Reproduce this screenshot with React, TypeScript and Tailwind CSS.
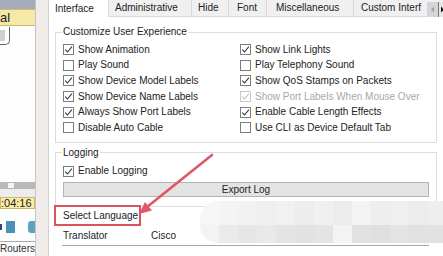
import React from "react";

function Check({ checked, disabled }: { checked: boolean; disabled?: boolean }) {
  return (
    <span
      className={`flex h-[11px] w-[11px] shrink-0 items-center justify-center border bg-white ${
        disabled ? "border-[#c8c8c8]" : "border-[#7d7d7d]"
      }`}
    >
      {checked && (
        <svg width="9" height="9" viewBox="0 0 9 9">
          <path
            d="M1.2 4.6 L3.5 7 L7.9 1.6"
            fill="none"
            stroke={disabled ? "#c4c4c4" : "#3a3a3a"}
            strokeWidth="1.1"
          />
        </svg>
      )}
    </span>
  );
}

function Row({ label, checked, disabled }: { label: string; checked: boolean; disabled?: boolean }) {
  return (
    <div className="flex h-[15.6px] items-center gap-[4px]">
      <Check checked={checked} disabled={disabled} />
      <span className={`whitespace-nowrap leading-[12px] ${disabled ? "text-[#a8a8a8]" : "text-[#222]"}`}>
        {label}
      </span>
    </div>
  );
}

const left = [
  ["Show Animation", true],
  ["Play Sound", false],
  ["Show Device Model Labels", true],
  ["Show Device Name Labels", true],
  ["Always Show Port Labels", true],
  ["Disable Auto Cable", false],
] as const;

const right = [
  ["Show Link Lights", true, false],
  ["Play Telephony Sound", false, false],
  ["Show QoS Stamps on Packets", true, false],
  ["Show Port Labels When Mouse Over", true, true],
  ["Enable Cable Length Effects", true, false],
  ["Use CLI as Device Default Tab", false, false],
] as const;

const tabs: [string, string, string][] = [
  ["Interface", "w-[59px]", "pl-[6px]"],
  ["Administrative", "w-[83px]", "pl-[6px]"],
  ["Hide", "w-[37px]", "pl-[6px]"],
  ["Font", "w-[38px]", "pl-[8px]"],
  ["Miscellaneous", "w-[87px]", "pl-[9px]"],
  ["Custom Interf", "w-[74px]", "pl-[7px]"],
];

function LeftPanel() {
  return (
    <div className="flex w-[36px] shrink-0 flex-col overflow-hidden border-r border-[#c4c4c4] bg-[#fdfdfd]">
      <div className="h-[9px] bg-[#a5abba]" />
      <div className="flex h-[17px] items-center border-y border-[#cdbd72] bg-[#f6e9a8] text-[13px] leading-[14px] text-[#222]">
        al
      </div>
      <div className="mt-[1px] h-[18px] w-[10px] rounded-br-[5px] border-b border-r border-[#666] bg-white pt-[3px]">
        <div className="h-[11px] w-[5px] bg-[#cfcfcf]" />
      </div>
      <div className="h-[137px]" />
      <div className="flex h-[7px] items-center bg-[#b9b9b9] pl-[8px]">
        <div className="h-[5px] w-[6px] bg-[#f4f4f4]" />
      </div>
      <div className="h-[8px] bg-[#ececec]" />
      <div className="flex h-[12px] items-center border border-[#cbb869] bg-[#f8eca6] text-[11px] leading-[12px] text-[#222]">
        :04:16
      </div>
      <div className="h-[11px]" />
      <div className="flex h-[13px] items-center gap-[4px]">
        <div className="h-[6px] w-[3px] bg-[#2c4a78]" />
        <div className="h-[12px] w-[11px] bg-[#4a93b8]" />
        <div className="ml-[9px] h-[12px] w-[8px] rounded-l-[3px] bg-[#5fa2c2]" />
      </div>
      <div className="h-[8px]" />
      <div className="border-t border-[#a9a9a9] pt-[1px] text-[10px] leading-[12px] text-[#333]">Routers</div>
    </div>
  );
}

function Dialog() {
  return (
    <div className="flex min-w-0 flex-1 flex-col border-l border-[#d2d2d2] bg-white">
      <div className="flex h-[17px] shrink-0 bg-[#f0f0f0]">
        {tabs.map(([t, w, pl], i) => (
          <div
            key={t}
            className={`${w} ${pl} flex shrink-0 items-center overflow-hidden whitespace-nowrap leading-[12px] text-[#222] ${
              i === 0 ? "bg-white" : "border-b border-l border-[#d9d9d9]"
            }`}
          >
            {t}
          </div>
        ))}
        <div className="flex h-[15px] w-[11px] shrink-0 items-center justify-center self-end bg-[#d6d6d6]">
          <svg width="5" height="7" viewBox="0 0 5 7">
            <path d="M4 0.5 L1 3.5 L4 6.5 Z" fill="#a0a0a0" />
          </svg>
        </div>
        <div className="flex h-[15px] w-[7px] shrink-0 items-center justify-center self-end border-l border-[#777] bg-[#e6e6e6]">
          <svg width="5" height="7" viewBox="0 0 5 7">
            <path d="M1 0.5 L4 3.5 L1 6.5 Z" fill="#111" />
          </svg>
        </div>
      </div>

      <div className="flex flex-col pl-[6px] pt-[9px]">
        <fieldset className="w-[382px] border border-[#dedede] pb-[6px] pl-[7px] pt-[4px]">
          <legend className="-ml-[1px] px-[1px] leading-[12px] text-[#222]">Customize User Experience</legend>
          <div className="grid grid-cols-[177px_1fr]">
            <div className="flex flex-col">
              {left.map(([l, c]) => (
                <Row key={l} label={l} checked={c} />
              ))}
            </div>
            <div className="flex flex-col">
              {right.map(([l, c, d]) => (
                <Row key={l} label={l} checked={c} disabled={d} />
              ))}
            </div>
          </div>
        </fieldset>

        <fieldset className="mt-[4px] w-[382px] border border-[#dedede] pb-[9px] pl-[7px] pr-[7px] pt-[5px]">
          <legend className="-ml-[1px] px-[1px] leading-[12px] text-[#222]">Logging</legend>
          <Row label="Enable Logging" checked />
          <div className="mt-[3px] flex h-[15px] items-center justify-center border border-[#b4b4b4] bg-[#e3e3e3] leading-[12px] text-[#222]">
            Export Log
          </div>
        </fieldset>

        <div className="mt-[3px] pl-[8px] leading-[12px] text-[#222]">Select Language</div>
        <div className="mt-[8px] flex pl-[8px] leading-[12px] text-[#222]">
          <span className="w-[88px]">Translator</span>
          <span>Cisco</span>
        </div>
        <div className="ml-[7px] mt-[3px] h-[12px] w-[367px] border-t border-[#a8a8a8] bg-white" />
      </div>
    </div>
  );
}

const blurTop = ["#f6f6f6", "#f4f4f4", "#f2f2f2", "#efefef", "#f1f1f1", "#ededed", "#f0f0f0", "#ececec", "#f3f3f3", "#eeeeee", "#efefef", "#ececec", "#eeeeee"];
const blurBot = ["#f3f3f3", "#eaeaea", "#e6e6e6", "#e9e9e9", "#e4e4e4", "#e2e2e2", "#e4e4e4", "#f3f3f3", "#e2e2e2", "#e0e0e0", "#e3e3e3", "#e1e1e1", "#e2e2e2"];

export default function App() {
  return (
    <div className="relative flex h-[256px] w-[443px] overflow-hidden bg-white font-['Liberation_Sans',Arial,sans-serif] text-[10px]">
      <LeftPanel />
      <div className="w-[12px] shrink-0 bg-[#efece9]" />
      <Dialog />

      {/* blurred watermark */}
      <div className="absolute left-[200px] top-[201px] flex h-[42px] w-[243px] flex-col overflow-hidden rounded-l-[18px]">
        <div className="flex h-[24px]">
          {blurTop.map((c, i) => (
            <div key={i} className="h-full w-[19px] shrink-0" style={{ background: c }} />
          ))}
        </div>
        <div className="flex h-[18px]">
          {blurBot.map((c, i) => (
            <div key={i} className="h-full w-[19px] shrink-0" style={{ background: c }} />
          ))}
        </div>
      </div>

      {/* annotation */}
      <div className="absolute left-[54px] top-[205px] h-[21px] w-[87px] border-2 border-[#d8545c]" />
      <svg className="pointer-events-none absolute left-0 top-0" width="443" height="256">
        <line x1="212" y1="155" x2="147" y2="207" stroke="#e0566a" strokeWidth="2.6" strokeLinecap="round" />
        <polygon points="139,214 152,210.5 145,202" fill="#e0566a" />
      </svg>
    </div>
  );
}
